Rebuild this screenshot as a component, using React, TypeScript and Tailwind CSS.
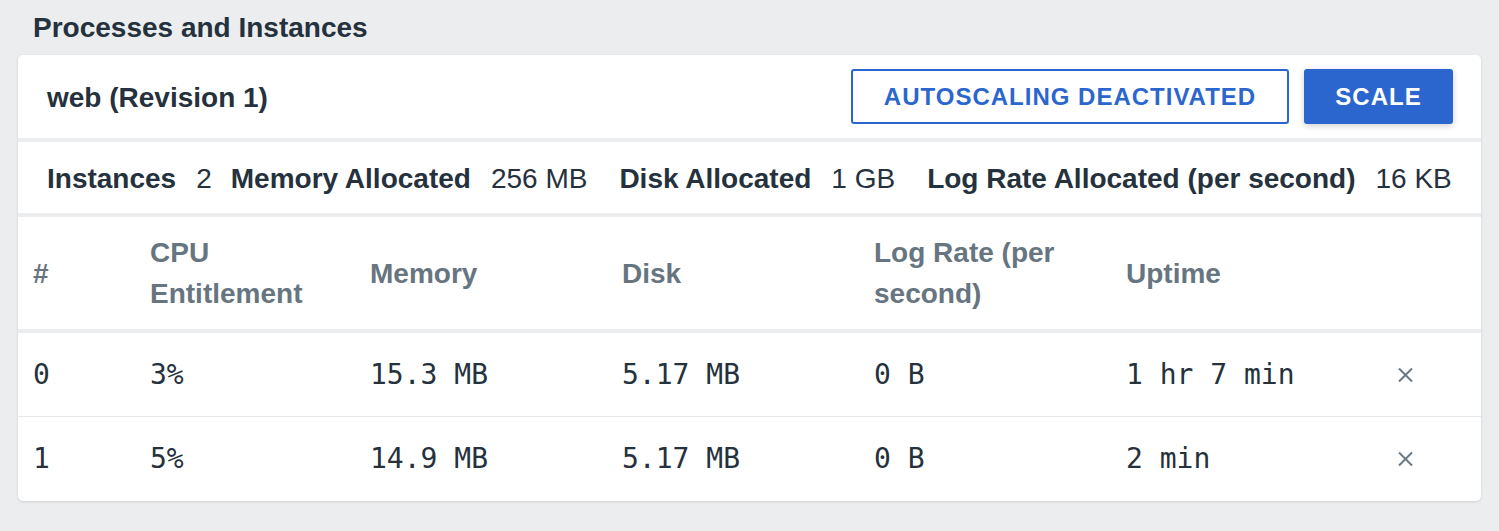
import React from 'react';

interface Instance {
  index: number;
  cpu: string;
  memory: string;
  disk: string;
  logRate: string;
  uptime: string;
}

const instances: Instance[] = [
  { index: 0, cpu: '3%', memory: '15.3 MB', disk: '5.17 MB', logRate: '0 B', uptime: '1 hr 7 min' },
  { index: 1, cpu: '5%', memory: '14.9 MB', disk: '5.17 MB', logRate: '0 B', uptime: '2 min' },
];

const stats = [
  { label: 'Instances', value: '2' },
  { label: 'Memory Allocated', value: '256 MB' },
  { label: 'Disk Allocated', value: '1 GB' },
  { label: 'Log Rate Allocated (per second)', value: '16 KB' },
];

const cols = 'grid grid-cols-[117px_220px_252px_252px_252px_252px_1fr]';

const CloseIcon = () => (
  <svg width="17" height="16" viewBox="0 0 17 16" fill="none" stroke="#6b7882" strokeWidth="2">
    <path d="M2 1.5 L15 14.5 M15 1.5 L2 14.5" />
  </svg>
);

export default function App() {
  return (
    <div className="min-h-[531px] bg-[#ebedef] px-[18px] pb-[30px] font-['Liberation_Sans',Arial,sans-serif] text-[#25323d]">
      <div className="flex h-[55px] items-center pl-[15px] text-[28px] font-bold">
        Processes and Instances
      </div>

      <div className="overflow-hidden rounded-[5px] bg-white shadow-[0_1px_3px_rgba(0,0,0,0.12)]">
        {/* process header */}
        <div className="flex h-[87px] items-center justify-between border-b-4 border-[#ebedef] pl-[29px] pr-[28px]">
          <div className="pt-[2px] text-[28px] font-bold">web (Revision 1)</div>
          <div className="flex items-center gap-[15px]">
            <button className="flex h-[55px] w-[438px] items-center justify-center rounded-[3px] border-2 border-[#2b66cf] text-[24px] font-bold tracking-[1px] text-[#2b66cf]">
              AUTOSCALING DEACTIVATED
            </button>
            <button className="flex h-[55px] w-[149px] items-center justify-center rounded-[3px] bg-[#2b66cf] text-[24px] font-bold tracking-[1px] text-white shadow-[0_2px_6px_rgba(0,0,0,0.18)]">
              SCALE
            </button>
          </div>
        </div>

        {/* allocation summary */}
        <div className="flex h-[75px] items-center border-b-4 border-[#ebedef] pl-[29px] pt-[2px] text-[28px]">
          {stats.map((s, i) => (
            <div key={s.label} className={`flex items-center ${i === 0 ? '' : i === 1 ? 'ml-[19px]' : 'ml-[32px]'}`}>
              <span className="font-bold">{s.label}</span>
              <span className="ml-[20px]">{s.value}</span>
            </div>
          ))}
        </div>

        {/* table header */}
        <div className={`${cols} h-[116px] items-center border-b-4 border-[#ebedef] text-[28px] font-bold leading-[41px] text-[#66757f]`}>
          <div className="px-[15px]">#</div>
          <div className="px-[15px]">CPU Entitlement</div>
          <div className="px-[15px]">Memory</div>
          <div className="px-[15px]">Disk</div>
          <div className="px-[15px]">Log Rate (per second)</div>
          <div className="px-[15px]">Uptime</div>
          <div />
        </div>

        {/* instance rows */}
        {instances.map((inst, i) => (
          <div
            key={inst.index}
            className={`${cols} h-[84px] items-center font-['DejaVu_Sans_Mono',monospace] text-[28px] ${i < instances.length - 1 ? 'border-b border-[#e6e8ea]' : ''}`}
          >
            <div className="px-[15px]">{inst.index}</div>
            <div className="px-[15px]">{inst.cpu}</div>
            <div className="px-[15px]">{inst.memory}</div>
            <div className="px-[15px]">{inst.disk}</div>
            <div className="px-[15px]">{inst.logRate}</div>
            <div className="px-[15px]">{inst.uptime}</div>
            <div className="flex pl-[34px]">
              <CloseIcon />
            </div>
          </div>
        ))}
      </div>
    </div>
  );
}
